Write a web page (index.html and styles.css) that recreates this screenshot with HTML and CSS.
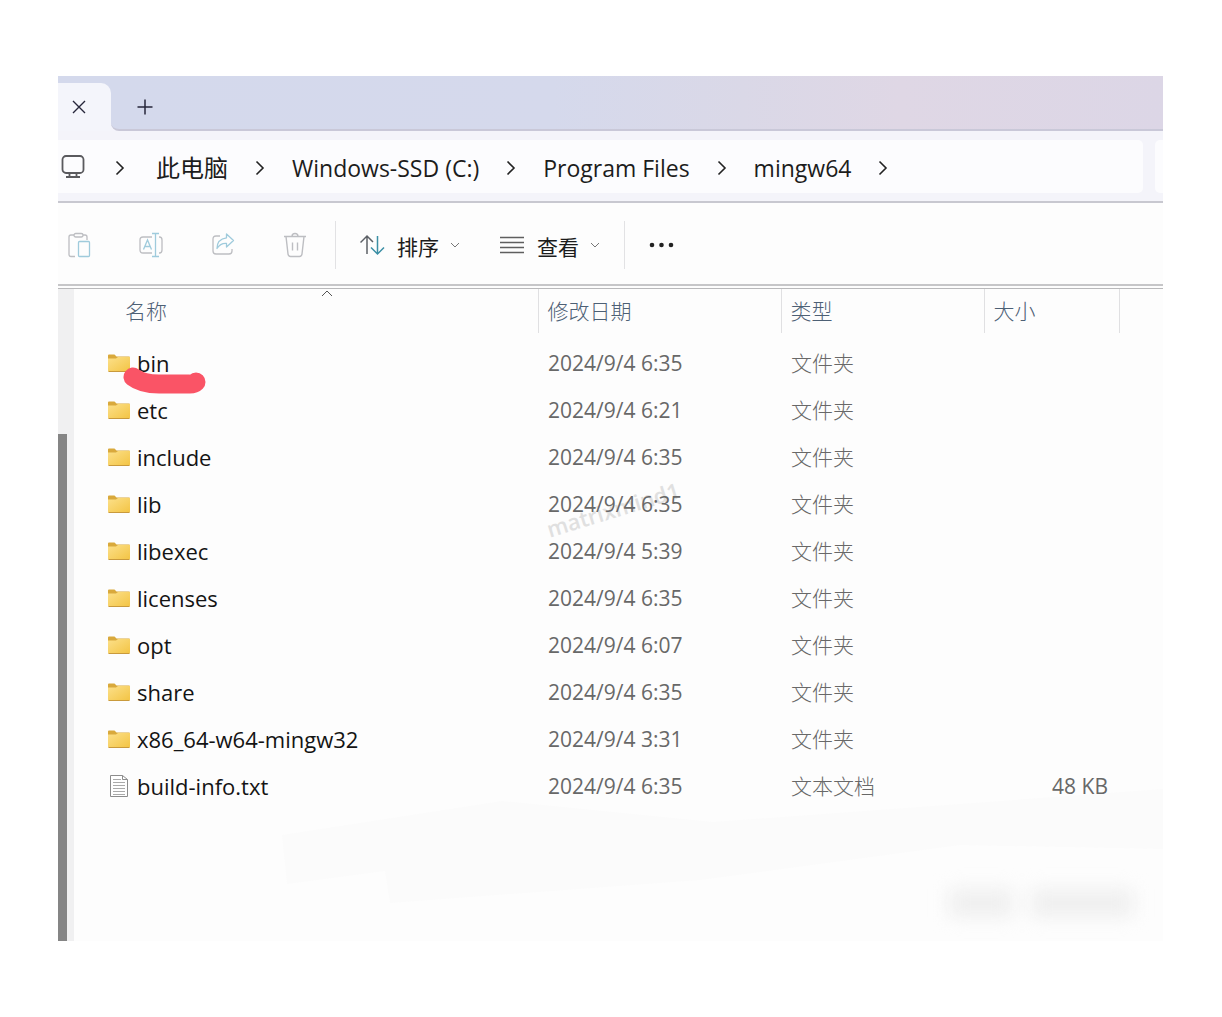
FILE: index.html
```html
<!DOCTYPE html>
<html lang="zh-CN">
<head>
<meta charset="utf-8">
<meta name="viewport" content="width=device-width, initial-scale=1">
<title>mingw64</title>
<link rel="stylesheet" href="styles.css">
</head>
<body>
<svg class="defs" width="0" height="0" aria-hidden="true">
  <defs>
    <linearGradient id="gold" x1="0" y1="0" x2="1" y2="1">
      <stop offset="0" stop-color="#fce08a"/>
      <stop offset="1" stop-color="#f3c444"/>
    </linearGradient>
    <symbol id="chevron" viewBox="0 0 10 16"><path d="M1.500 1.500L8 8l-6.500 6.500" fill="none" stroke="#222" stroke-width="1.600"/></symbol>
    <symbol id="down" viewBox="0 0 10 8"><path d="M1 2l4 4 4-4" fill="none" stroke="#777" stroke-width="1"/></symbol>
    <symbol id="folder" viewBox="0 0 24 20">
      <path d="M1 2.500q0-1 1-1h5.500l2 2H22q1 0 1 1V8H1z" fill="#d9a93c"/>
      <path d="M1 5.500h8l2-1.500h12v13.500q0 1-1 1H2q-1 0-1-1z" fill="url(#gold)"/>
      <path d="M1.500 18.500h21" stroke="#c99a3c" stroke-width="1"/>
    </symbol>
  </defs>
</svg>

<main class="window">
  <header class="tabs">
    <div class="tab">
      <button class="icon-button" aria-label="关闭标签页">
        <svg width="14" height="14" viewBox="0 0 14 14"><path d="M1 1l12 12M13 1L1 13" stroke="#26263a" stroke-width="1.400"/></svg>
      </button>
    </div>
    <div class="tab-rest">
      <button class="icon-button" aria-label="新建标签页">
        <svg width="16" height="16" viewBox="0 0 16 16"><path d="M8 .5v15M.5 8h15" stroke="#26263a" stroke-width="1.500"/></svg>
      </button>
    </div>
  </header>

  <div class="address">
    <nav class="path" aria-label="路径">
      <svg class="monitor" width="24" height="26" viewBox="0 0 24 26" fill="none" stroke="#5a5a5e" stroke-width="1.800"><rect x="1.500" y="1" width="21" height="17" rx="3.500"/><path d="M8.500 18v3.500M15.500 18v3.500M5 22h14"/></svg>
      <svg class="chevron root"><use href="#chevron"/></svg>
      <a class="zh" href="#">此电脑</a>
      <svg class="chevron"><use href="#chevron"/></svg>
      <a href="#">Windows-SSD (C:)</a>
      <svg class="chevron"><use href="#chevron"/></svg>
      <a href="#">Program Files</a>
      <svg class="chevron"><use href="#chevron"/></svg>
      <a href="#">mingw64</a>
      <svg class="chevron"><use href="#chevron"/></svg>
    </nav>
    <div class="search"></div>
  </div>

  <div class="toolbar">
    <div class="group actions">
      <button class="icon-button" aria-label="粘贴">
        <svg width="24" height="28" viewBox="0 0 24 28" fill="none" stroke-width="1.300"><g stroke="#bdbec2"><path d="M8 25.500H4q-2 0-2-2V6q0-2 2-2h3M16 4h2q2 0 2 2v3"/><rect x="7" y="2.500" width="9" height="3.500" rx="1.700"/></g><rect x="11.500" y="10.500" width="11" height="15" rx="1" stroke="#9fcbdc"/></svg>
      </button>
      <button class="icon-button" aria-label="重命名">
        <svg width="24" height="28" viewBox="0 0 24 28" fill="none" stroke-width="1.300"><path d="M13 22H4q-3 0-3-3V9q0-3 3-3h9M20 6h.5Q23 6 23 9v10q0 3-2.500 3H20" stroke="#bdbec2"/><path d="M4.500 18.500L8.500 9l4 9.500M6 15.500h5M16.500 2.500v23M13 2.500h7M13 25.500h7" stroke="#9fcbdc"/></svg>
      </button>
      <button class="icon-button" aria-label="共享">
        <svg width="24" height="28" viewBox="0 0 24 28" fill="none" stroke-width="1.300" stroke-linejoin="round"><path d="M9 5H5Q2 5 2 8v12q0 3 3 3h13q3 0 3-3v-2" stroke="#bdbec2"/><path d="M15.500 3l7 6.500-7 6.500v-3.500q-6-.5-9.500 5Q6 8 15.500 6.800z" stroke="#9fcbdc"/></svg>
      </button>
      <button class="icon-button" aria-label="删除">
        <svg width="24" height="28" viewBox="0 0 24 28" fill="none" stroke="#bdbec2" stroke-width="1.400"><path d="M1 5.500h22M9 5.500q0-3 3-3t3 3M3 5.500l2 17.500q.3 2.500 2.500 2.500h9q2.200 0 2.500-2.500l2-17.500M9.500 11.500v8M14.500 11.500v8"/></svg>
      </button>
    </div>
    <div class="group menus">
      <button class="menu">
        <svg width="26" height="24" viewBox="0 0 26 24" fill="none" stroke-width="1.500"><path d="M7 21V3M.5 9.500L7 3l6 6" stroke="#5c6066"/><path d="M17.500 3v18M11 14.500l6.500 6.500 6.500-6.500" stroke="#3b8fa5"/></svg>
        <span>排序</span>
        <svg class="down"><use href="#down"/></svg>
      </button>
      <button class="menu">
        <svg width="26" height="24" viewBox="0 0 26 24" stroke="#5f5f5f" stroke-width="1.500"><path d="M0 4.500h24M0 9.500h24M0 14.500h24M0 19.500h24"/></svg>
        <span>查看</span>
        <svg class="down"><use href="#down"/></svg>
      </button>
    </div>
    <div class="group">
      <button class="icon-button" aria-label="更多">
        <svg width="26" height="6" viewBox="0 0 26 6" fill="#222"><circle cx="3" cy="3" r="2.300"/><circle cx="12.500" cy="3" r="2.300"/><circle cx="22" cy="3" r="2.300"/></svg>
      </button>
    </div>
  </div>

  <div class="body">
    <div class="scroll"><div class="thumb"></div></div>
    <section class="files">
      <svg class="smudge" viewBox="0 0 1087 652" preserveAspectRatio="none" aria-hidden="true">
        <path d="M206 546L426 512 637 533 1087 500V560L884 556 624 591 314 614 309 582 211 595z" fill="#fbfbfb"/>
      </svg>
      <div class="watermark">matrixmind1</div>
      <div class="haze" aria-hidden="true"><i></i><i></i></div>
      <table>
        <colgroup><col><col class="c-date"><col class="c-type"><col class="c-size"><col class="c-end"></colgroup>
        <thead>
          <tr>
            <th class="name"><button>名称</button><svg class="sort" width="12" height="8" viewBox="0 0 12 8"><path d="M1 7l5-5 5 5" fill="none" stroke="#555"/></svg></th>
            <th><button>修改日期</button></th>
            <th><button>类型</button></th>
            <th><button>大小</button></th>
            <th></th>
          </tr>
        </thead>
        <tbody>
          <tr><td class="name"><div class="entry"><svg class="icon"><use href="#folder"/></svg><span>bin</span><svg class="stroke" width="84" height="30" viewBox="0 0 84 30" aria-hidden="true"><path d="M11 10q9 7 26 7h31q4 0 6-2" fill="none" stroke="#fa5466" stroke-width="19" stroke-linecap="round" stroke-linejoin="round"/></svg></div></td><td>2024/9/4 6:35</td><td class="type">文件夹</td><td></td><td></td></tr>
          <tr><td class="name"><div class="entry"><svg class="icon"><use href="#folder"/></svg><span>etc</span></div></td><td>2024/9/4 6:21</td><td class="type">文件夹</td><td></td><td></td></tr>
          <tr><td class="name"><div class="entry"><svg class="icon"><use href="#folder"/></svg><span>include</span></div></td><td>2024/9/4 6:35</td><td class="type">文件夹</td><td></td><td></td></tr>
          <tr><td class="name"><div class="entry"><svg class="icon"><use href="#folder"/></svg><span>lib</span></div></td><td>2024/9/4 6:35</td><td class="type">文件夹</td><td></td><td></td></tr>
          <tr><td class="name"><div class="entry"><svg class="icon"><use href="#folder"/></svg><span>libexec</span></div></td><td>2024/9/4 5:39</td><td class="type">文件夹</td><td></td><td></td></tr>
          <tr><td class="name"><div class="entry"><svg class="icon"><use href="#folder"/></svg><span>licenses</span></div></td><td>2024/9/4 6:35</td><td class="type">文件夹</td><td></td><td></td></tr>
          <tr><td class="name"><div class="entry"><svg class="icon"><use href="#folder"/></svg><span>opt</span></div></td><td>2024/9/4 6:07</td><td class="type">文件夹</td><td></td><td></td></tr>
          <tr><td class="name"><div class="entry"><svg class="icon"><use href="#folder"/></svg><span>share</span></div></td><td>2024/9/4 6:35</td><td class="type">文件夹</td><td></td><td></td></tr>
          <tr><td class="name"><div class="entry"><svg class="icon"><use href="#folder"/></svg><span>x86_64-w64-mingw32</span></div></td><td>2024/9/4 3:31</td><td class="type">文件夹</td><td></td><td></td></tr>
          <tr><td class="name"><div class="entry"><svg class="icon" viewBox="0 0 24 24"><path d="M3.500 1.500h12l5 4v17h-17z" fill="#fff" stroke="#8c8c8c"/><path d="M15.500 1.500v4h5" fill="none" stroke="#8c8c8c"/><path d="M6 5.500h8M6 8.500h12M6 11.500h12M6 14.500h12M6 17.500h12M6 20.500h12" stroke="#aaa"/></svg><span>build-info.txt</span></div></td><td>2024/9/4 6:35</td><td class="type">文本文档</td><td class="size">48 KB</td><td></td></tr>
        </tbody>
      </table>
    </section>
  </div>
</main>
</body>
</html>
```

FILE: styles.css
```css
* { box-sizing: border-box; }

body {
  margin: 0;
  padding: 76px 59px 76px 58px;
  background: #fff;
  color: #1c1c1c;
  font: 21px/28px "Open Sans", "Noto Sans CJK SC", sans-serif;
}

svg { display: block; flex: none; }
.defs { position: absolute; }

button {
  padding: 0;
  border: 0;
  background: none;
  color: inherit;
  font: inherit;
  cursor: pointer;
}

a { color: inherit; text-decoration: none; }

.window { overflow: hidden; background: #fdfdfd; }

/* Tab strip */
.tabs {
  display: flex;
  height: 55px;
  background: #f4f4fb;
}

.tab {
  position: relative;
  display: flex;
  align-items: center;
  width: 53px;
  padding: 7px 0 0 14px;
  background: #d4d9ec;
}

.tab::before {
  content: "";
  position: absolute;
  inset: 7px 0 0;
  border-radius: 0 10px 0 0;
  background: #f4f5fb;
}

.tab .icon-button { position: relative; }

.tab-rest {
  display: flex;
  flex: 1;
  align-items: center;
  padding: 9px 0 0 26px;
  border-bottom: 2px solid #c9c8d8;
  border-radius: 0 0 0 8px;
  background: linear-gradient(90deg, #d4d9ec 0, #d5d9ec 42%, #dad8e7 60%, #dfd7e5 75%, #dcd6e6);
}

/* Address bar */
.address {
  display: flex;
  gap: 12px;
  height: 72px;
  padding: 9px 0 8px;
  border-bottom: 2px solid #c8c8d0;
  background: #f4f4fa;
}

.path {
  display: flex;
  flex: 1;
  align-items: center;
  gap: 27px;
  padding: 3px 0 0 3px;
  border-radius: 0 5px 5px 0;
  background: #fcfcfe;
  font-size: 23px;
  line-height: 32px;
}

.path .zh { font-size: 24px; }
.monitor { margin-right: 3px; }
.chevron { width: 10px; height: 16px; }
.root { margin-right: 4px; }
.search { width: 8px; border-radius: 5px 0 0 5px; background: #fcfcfe; }

/* Command bar */
.toolbar {
  display: flex;
  align-items: center;
  height: 83px;
  padding-top: 2px;
  border-bottom: 2px solid #c6c6c8;
}

.group {
  display: flex;
  align-items: center;
  height: 48px;
  padding: 0 24px;
}

.group + .group { border-left: 1px solid #e2e2e4; }
.actions { gap: 48px; padding: 0 28px 0 9px; }
.menus { gap: 40px; }
.menu { display: flex; align-items: center; gap: 11px; }
.menu span { padding-top: 4px; }
.down { width: 10px; height: 8px; }

/* File list */
.body {
  display: flex;
  margin-top: 2px;
  border-top: 1px solid #b9b9bb;
}

.scroll {
  width: 16px;
  padding-top: 145px;
  background: #f0f0f1;
}

.thumb { width: 9px; height: 100%; background: #858585; }

.files {
  position: relative;
  flex: 1;
  margin-left: 2px;
  padding-bottom: 132px;
}

.smudge { position: absolute; inset: 0; width: 100%; height: 100%; }

.watermark {
  position: absolute;
  top: 206px;
  left: 468px;
  color: #e0e0e0;
  font-size: 22px;
  font-weight: 600;
  transform: rotate(-17deg);
}

.haze {
  position: absolute;
  right: 30px;
  bottom: 24px;
  display: flex;
  gap: 18px;
  filter: blur(9px);
}

.haze i { width: 64px; height: 28px; background: #efefef; }
.haze i + i { width: 102px; }

table {
  position: relative;
  width: 100%;
  border-collapse: collapse;
  table-layout: fixed;
}

.c-date { width: 243px; }
.c-type { width: 203px; }
.c-size { width: 135px; }
.c-end { width: 44px; }

th {
  height: 44px;
  padding: 0 0 0 9px;
  color: #4d6075;
  font-weight: 300;
  text-align: left;
}

th + th { border-left: 1px solid #e0e0e2; }
th.name { position: relative; padding-left: 49px; }
.sort { position: absolute; top: 0; left: 245px; }

td { height: 47px; padding: 0 0 0 10px; color: #686868; }
tbody::before { content: ""; display: block; height: 6px; }
td.name { padding-left: 31px; color: #141414; font-size: 22px; }
td.type { font-weight: 300; }
td.size { padding-right: 11px; text-align: right; }

.entry { position: relative; display: flex; align-items: center; gap: 6px; }
.icon { width: 24px; height: 24px; }
.stroke { position: absolute; top: 18px; left: 15px; }
```
